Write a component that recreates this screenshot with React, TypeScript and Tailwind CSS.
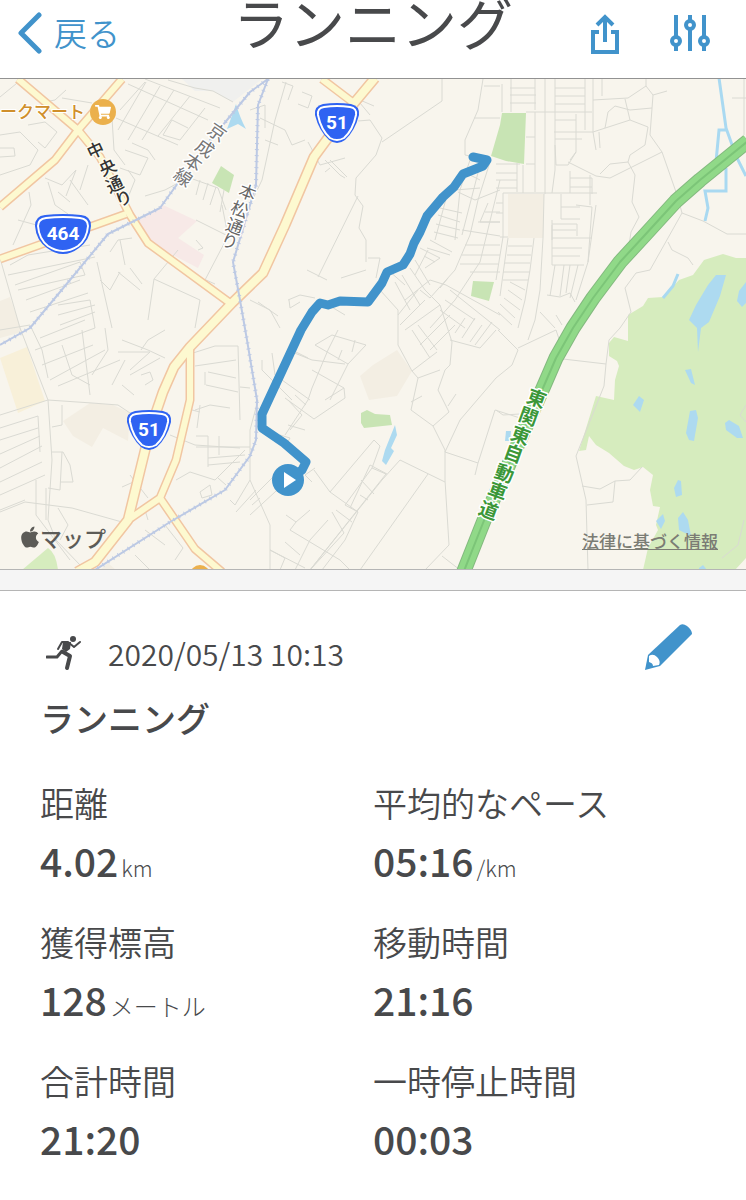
import { FaApple, FaShoppingCart } from "react-icons/fa";

type Stat = {
  label: string;
  value: string;
  unit?: string;
  unitSize?: string;
};

type Glyph = [string, number, number];

const stats: Stat[] = [
  { label: "距離", value: "4.02", unit: "km", unitSize: "text-[22px]" },
  { label: "平均的なペース", value: "05:16", unit: "/km", unitSize: "text-[22px]" },
  { label: "獲得標高", value: "128", unit: "メートル", unitSize: "text-[24px]" },
  { label: "移動時間", value: "21:16" },
  { label: "合計時間", value: "21:20" },
  { label: "一時停止時間", value: "00:03" },
];

// Map geometry, viewBox starts at y=79
const streets = [
  // top left
  "M22 79L0 97M32 88Q38 106 55 100L66 90M0 135L20 132L38 150L30 165L0 175M28 125L45 122L57 132L45 148L38 142M0 148L14 148L15 156L0 157M70 180L88 205M62 98L92 103",
  "M120 110L145 82M128 84L208 120M116 118L178 145M146 82L118 130M160 86L128 140M174 90L142 140M190 96L158 136M145 79L220 108M168 80L195 88L213 91L233 102M205 108L180 140L163 135L172 120L188 128M112 118L114 150L125 165M125 150L148 158L140 175L120 168M132 143L148 150L155 160",
  "M45 178L62 185L76 170L66 196M48 182L55 205L68 214M58 192L70 202M29 192L31 205L13 245M18 220L40 226M88 165L80 190M128 170L135 180L125 205M145 196L165 190L178 183M190 178L218 188L226 210M200 180L196 195M208 183L203 200M216 187L210 205M224 190L220 212",
  "M196 220L228 236M222 205L228 236L205 280M196 240L203 248L198 250M120 240L125 265M110 252L118 240L132 238M154 279L200 300L195 328M178 250L154 279L148 320M118 272L140 290M130 268L142 284M206 280L215 284",
  // left
  "M0 258L20 328L48 400L52 460L48 520L56 540L80 565M8 275L95 257M15 285L80 262L85 275L18 290M10 265L28 255L90 245M97 262L112 328M100 280L110 290L120 272M26 300L80 280M30 312L88 293M60 325L95 312M58 305L90 300L95 328M58 315L95 305",
  "M0 330L30 325L42 350L48 378M35 350L95 328M42 365L93 345M50 380L105 350M40 338L85 320M58 386L120 360M62 345L72 375L90 385M82 330L90 395M105 328L108 350L92 375M122 340L148 350L165 358M118 352L150 352L130 370M125 360L112 385M141 350L148 340L165 330M141 375L150 372L153 380L145 385M122 385L134 395M130 375L160 358",
  "M0 415L48 400L92 403L118 405L130 413M0 428L38 416L40 452M0 440L38 428M0 454L40 436M0 468L42 446M0 482L42 462M0 495L45 475M0 510L25 500M52 452L63 452L70 465L73 482L60 482M48 488L60 490L62 452M62 405L62 425L52 427M0 512L25 502L72 508L122 522M46 488L46 520M58 508L68 525L60 540M36 480L36 515L70 560M148 430L152 440M130 475L148 498M122 487L138 480M145 510L148 520",
  // route 51 surroundings
  "M193 353L215 346L238 346L240 420M195 366L236 360M208 372L236 378M206 385L238 392M205 372L205 385M240 387L250 388M195 410L210 405L230 408M200 405L197 428M192 410L200 412M170 435L195 445L240 448M196 436L208 436L208 467M196 447L250 447M219 436L219 455M208 458L245 455M208 465L240 462M176 480L190 472L215 480L245 450M218 478L226 485M200 492L210 485L212 495L202 498L200 492",
  "M250 480L235 505L230 500M145 530L165 545M165 525L183 548L175 560M135 555L150 570M258 400L250 430L250 480L270 525V570M250 515L288 480M250 500L275 475M236 512L256 490M252 505L260 498",
  "M250 110L265 105L265 128M286 82L275 120L262 180L250 205M282 82L293 86L288 100M302 92L312 96L308 108L298 104M260 118L285 130L292 145L305 140M265 140L278 145M308 142L315 155M320 165L345 158M325 160L340 175L345 178M325 172L330 168M370 115L360 103M358 121L370 120M370 120L382 138L376 155L356 178L355 195L363 206L359 228L366 240L366 262M360 100L374 106M442 79V101L382 142M358 196L318 277M307 270L327 280M341 278L366 270M368 258L380 258L376 278M312 150L320 165M330 160L347 177",
  // north estates
  "M483 79L478 110L465 140L465 155L490 160M474 118H500M484 86H500M502 84V112M511 79V112M535 79V110M545 79V194M555 79V170L552 193M585 79V130M510 88H535M510 95H536M510 103H536M555 88H585M555 96H585M555 104H585M526 112H592M593 79V132L554 132M555 120H576M555 139H582M576 114V152L570 160M593 100L628 98L646 86V79M602 79V96M625 99L630 120L593 132M605 128L608 112L615 106L630 110L652 108M630 120L648 127M646 86L653 95L650 135L662 152L676 192M653 95L667 91M648 127L645 145L630 155L628 162L610 164L600 174M628 162L635 175L632 202L639 217L631 232L629 245M593 132L596 150M599 132L600 148M568 162L596 176L610 178L662 152",
  "M535 112V192M526 164H535M526 137H535M496 164H520M496 173H517M496 180H517M496 188H517M517 163V192M523 165V193M503 193H597M544 194L543 238M552 238H592M561 194V219H580M570 171V193M570 178H592V194M570 187H592M561 207H580M576 205L592 207L588 262L576 300M596 205L588 262M552 220V265H584M552 224H577V236M552 230H576M552 248H582M552 256H580M552 240V225M590 205V175M555 145L556 165H568L576 152",
  "M555 265L550 296M564 265L560 296M570 265L566 293M578 265L570 298M547 295L560 297L570 293L575 302M508 238L500 296M534 238L530 270L525 300L518 328M543 238L540 290L535 320L528 340M508 246H532M507 255H531M505 263H530M503 272H530M503 280H528M500 237H508M503 193V237L496 280M496 203H503M496 213H503M510 282L525 290M508 290L522 300M504 298L520 310M500 304L515 318M498 312L512 325M540 312L555 328M556 315L562 325",
  // hatched residential blocks
  "M470 160L460 190L455 240M490 162L478 200L470 235L455 270L430 298M480 180L470 175M455 190L480 188M480 165L462 235M500 180L480 262L455 300L430 328M458 192L475 200L500 190M447 195L435 240M440 208L462 213M438 215L460 222M436 224L460 230M434 232L458 238M430 240L452 252M427 248L450 255M488 203L480 222H500M485 212H500M478 222H500M462 230L500 236M465 245H500M462 255H500M460 264H498M470 272H500",
  "M420 248L440 258L425 268M428 250L415 275M424 256L435 262M415 260L430 285M410 268L425 290L440 305M402 275L420 305M395 282L410 310M380 290L398 310L398 345L412 371M388 270L405 285M405 300L430 280L446 285L500 315M430 298L420 290M450 290L500 330M445 300L475 320M440 310L465 328M448 278L440 288M398 315L418 290M400 325L425 300M405 330L440 305",
  "M412 330L430 358M418 325L437 350M425 340L450 315M430 350L455 325M420 345L445 320M440 305L452 342L450 365L445 370M412 371L418 378L440 370M418 378L411 410L433 426L445 450V480L449 545L425 570M412 371L437 352M445 370L438 390L449 412L433 426M450 340L480 348L496 330M455 333L465 318M462 338L475 318M470 342L482 325M475 345L492 322M411 402L422 396M448 406L456 394",
  "M498 330L518 350L512 365L496 378L460 420L445 452M561 345L556 330L518 348M496 410L503 415L520 414M445 452L478 463L475 475M445 482L400 460L382 480L310 570M478 463L495 410L520 418M428 474L360 570M442 556L460 570M370 465L387 474M361 480L374 494M350 508L370 465",
  // centre
  "M330 306L345 315M288 300L300 295L315 298M289 300L290 308L300 302M250 300L270 310L280 328M258 302L278 316M315 345L332 335L366 345L348 364L315 345M338 330L328 350L312 388L308 400M292 352L312 360L345 364M296 352L308 358M342 350L338 360M355 340L352 352M348 364L330 400M312 370L344 388L345 398L314 419L285 398M344 388L325 400M272 353L275 375L310 400M288 400L302 415L290 430M295 395L306 405M308 400L285 435M288 425L305 430M280 435L290 438L286 445M262 360L262 370L292 400",
  "M315 468L305 475L312 482M314 470L330 492L358 512L345 540L322 570M330 492L374 440L380 446L372 468L345 505M336 510L352 522M332 512L344 533L310 570M328 520L310 540L295 570M310 510L296 522L290 530L340 560L350 570M286 515L296 522M270 550L305 568M285 542L300 555M280 570L285 558L270 550M345 505L358 512M372 468L386 474L310 570M360 495L368 500",
  // south east
  "M679 202L682 213L650 270L636 273L625 288L631 312L620 328M682 213L703 221L727 234H746M668 242L672 250L688 258L693 265M563 359L606 364L609 340L620 328M606 364L604 386L576 456L586 500L588 570M582 486L600 489L615 481L630 480L642 467M615 481L613 502L587 505M732 98H746M744 79V135",
  "M746 405L740 415L746 422M744 520L738 545L722 558",
];

const forest =
  "M628 328L628 315L643 306L648 298L663 297L679 280L693 275L704 260L723 254L736 258H746V558L735 570H643L648 548L658 530L656 525L660 507L653 506L650 490L653 475L643 467L634 470L624 466L609 453L596 445L589 436L586 450L579 451L596 396L614 400L615 380L619 366L617 361L609 356V343L614 337L628 341Z";

const parks = [
  "M491 156L500 125L502 113H526L524 164L506 161Z",
  "M473 281L494 282L489 301L471 296Z",
  "M221 166L234 175L229 193L212 183Z",
  "M361 413L367 410L375 414L390 415L392 425L364 428L361 423Z",
];

const lakes = [
  "M236 104Q240 118 246 129L238 124L227 129Q232 116 236 104Z",
  "M395 425L397 435L391 448L394 451L386 465L382 461L385 450Z",
  "M726 275H716L708 285L696 305L689 320L697 328L698 352L701 328L709 322L720 296Z",
  "M746 282L739 291L737 301L742 307L746 303Z",
  "M685 370L691 369L695 385L691 383Z",
  "M639 396L644 400L640 412L633 405Z",
  "M690 411L696 410L698 418L694 441L689 440L686 433Z",
  "M725 423L729 420L739 426L743 438L737 438L726 430Z",
  "M678 480L681 481L682 495L676 497L674 488Z",
  "M683 512L688 520L691 536L679 530L678 518Z",
  "M663 514L665 521L661 529L656 521Z",
  "M699 568L703 565L707 570H699Z",
  "M506 431H511L510 441H505Z",
];

const arterials =
  "M18 79L78 130L100 157L130 215L148 243L230 303M122 79L78 130L55 160L0 207M0 259L126 214M322 79L355 104M190 348V400L176 460L160 498L128 520M160 498L195 549L222 572";

const route51 =
  "M375 78L350 108L314 157L285 225L263 273L232 303L190 347L174 367L163 392L150 430L128 520L95 562L77 572";

const railways =
  "M268 79L250 92L218 131L178 183L160 208L108 234L60 292L30 328L0 345M268 79L258 105L256 185L233 262L240 300L247 340L257 400L256 440L250 456L225 490L170 522L95 570";

const expressway =
  "M748 141L700 180L676 201L644 236L620 262L593 298L573 328L556 358L543 388L485 518L462 576";

const track =
  "M473 157L487 160L483 166L463 174L454 187L443 197L427 216L420 232L414 243L410 254L403 265L387 272L382 283L368 302L340 301L328 305L320 303L312 312L301 330L262 414L262 428L284 443L306 462L302 470L288 480";

const chuoStreet: Glyph[] = [["中", 95, 149], ["央", 107, 166], ["通", 114, 183], ["り", 123, 197]];
const keiseiLine: Glyph[] = [["京", 218, 131], ["成", 206, 147], ["本", 194, 161], ["線", 184, 176]];
const honmatsuStreet: Glyph[] = [["本", 248, 191], ["松", 240, 208], ["通", 235, 225], ["り", 230, 240]];
const higashiKanto: Glyph[] = [
  ["東", 537, 397],
  ["関", 529, 415],
  ["東", 521, 434],
  ["自", 514, 452],
  ["動", 505, 472],
  ["車", 498, 490],
  ["道", 489, 509],
];

function RoadLabel({ glyphs, angle, className }: { glyphs: Glyph[]; angle: number; className: string }) {
  return (
    <g className={className} textAnchor="middle" strokeWidth="3" strokeLinejoin="round" paintOrder="stroke">
      {glyphs.map(([char, x, y]) => (
        <text key={`${x}-${y}`} x={x} y={y} dominantBaseline="central" transform={`rotate(${angle} ${x} ${y})`}>
          {char}
        </text>
      ))}
    </g>
  );
}

function Shield51({ x, y }: { x: number; y: number }) {
  return (
    <g transform={`translate(${x} ${y})`}>
      <path
        d="M-14 -19Q0 -21 14 -19Q23 -17 22 -8Q18 8 8 17Q0 23 -8 17Q-18 8 -22 -8Q-23 -17 -14 -19Z"
        fill="#2f63f2"
      />
      <path
        d="M-13 -16Q0 -18 13 -16Q20 -15 19 -8Q16 7 7 15Q0 19 -7 15Q-16 7 -19 -8Q-20 -15 -13 -16Z"
        fill="none"
        stroke="#fff"
        strokeWidth="2"
      />
      <text y="6" textAnchor="middle" className="fill-white font-[Roboto] text-[19px] font-bold">
        51
      </text>
    </g>
  );
}

function Shield464() {
  return (
    <g transform="translate(63 234)">
      <path
        d="M-18 -19Q0 -21 18 -19Q28 -18 28 -8Q27 6 16 14Q0 26 -16 14Q-27 6 -28 -8Q-28 -18 -18 -19Z"
        fill="#2f63f2"
      />
      <path
        d="M-17 -16Q0 -18 17 -16Q25 -15 25 -8Q24 5 15 12Q0 22 -15 12Q-24 5 -25 -8Q-25 -15 -17 -16Z"
        fill="none"
        stroke="#fff"
        strokeWidth="2"
      />
      <text y="6" textAnchor="middle" className="fill-white font-[Roboto] text-[19px] font-bold">
        464
      </text>
    </g>
  );
}

function RouteMap() {
  return (
    <svg viewBox="0 79 746 490" className="block h-auto w-full bg-[#f8f5ed]" role="img" aria-label="ランニングのルート">
      <path d="M182 79H262L233 102L213 91H195Z" fill="#f0f0ee" />
      <path d="M163 205L197 221L178 238L204 255L198 268L169 253L150 243L138 221Z" fill="#f7e9e7" />
      <path d="M0 358L27 347L45 401L18 413Z" fill="#f8f0d9" />
      <path
        d="M0 301L10 297L22 332L0 338ZM508 194H544L543 238H508ZM360 376L373 365L397 350L412 371L397 396L369 400ZM63 421L90 403L113 405L130 413L128 441L103 428L92 447L73 436ZM100 570L108 563L116 570Z"
        fill="#f3eee3"
      />
      <path d={forest} fill="#d6ecbe" />
      <path d="M22 570L48 548Q56 553 58 570Z" fill="#d6ecbe" />
      {parks.map((d) => (
        <path key={d} d={d} fill="#c8e4b4" />
      ))}
      {lakes.map((d) => (
        <path key={d} d={d} fill="#addaf0" />
      ))}
      <path
        d="M719 78L726 128L736 156L746 176M726 130H719L716 162M726 168V191H705L708 208L705 221M678 274L673 286L663 298"
        fill="none"
        stroke="#a9d9f1"
        strokeWidth="3"
      />
      {streets.map((d) => (
        <path key={d} d={d} fill="none" stroke="#dadad3" strokeWidth="1" />
      ))}

      <g fill="none" strokeLinejoin="round">
        <path d={arterials} stroke="#f1c6a2" strokeWidth="9" />
        <path d={route51} stroke="#f1c6a2" strokeWidth="11" />
        <path d={arterials} stroke="#fdf9d0" strokeWidth="6" />
        <path d={route51} stroke="#fdf9d0" strokeWidth="8" />
        <path d={railways} stroke="#bcc9e4" strokeWidth="2" />
        <path d={railways} stroke="#bcc9e4" strokeWidth="4" strokeDasharray="1 5" />
        <path d={expressway} stroke="#83b97f" strokeWidth="15" />
        <path d={expressway} stroke="#90d988" strokeWidth="13" />
        <path d={expressway} stroke="#7cc578" strokeWidth="2" />
        <path d={track} stroke="#4193cb" strokeWidth="9" strokeLinecap="round" />
      </g>

      <g className="font-['Noto_Sans_CJK_JP',sans-serif]">
        <RoadLabel glyphs={chuoStreet} angle={-25} className="fill-[#333] stroke-[#fdfbf0] text-[17px] font-medium" />
        <RoadLabel glyphs={keiseiLine} angle={35} className="fill-[#777] stroke-white text-[18px]" />
        <RoadLabel glyphs={honmatsuStreet} angle={20} className="fill-[#666] stroke-white text-[17px]" />
        <RoadLabel glyphs={higashiKanto} angle={20} className="fill-[#3b9738] stroke-white text-[19px] font-bold" />
        <text x="0" y="118" className="fill-[#d08f2b] stroke-white text-[17px] font-medium" strokeWidth="2" paintOrder="stroke">
          ークマート
        </text>
      </g>

      <circle cx="103" cy="112" r="13" fill="#ebb04c" />
      <FaShoppingCart x="95" y="104" width="16" height="16" size={16} color="#fff" />
      <circle cx="200" cy="575" r="10" fill="#ebb04c" />

      <Shield51 x={337} y={123} />
      <Shield51 x={149} y={430} />
      <Shield464 />

      <circle cx="288" cy="480" r="16" fill="#4193cb" />
      <path d="M284 472V488L296 480Z" fill="#fff" />
    </svg>
  );
}

function RunnerIcon() {
  return (
    <svg viewBox="0 0 36 36" className="size-9" fill="none" stroke="currentColor" strokeLinejoin="round" aria-hidden="true">
      <circle cx="27" cy="4" r="3" fill="currentColor" stroke="none" />
      <path d="M12 14L16 7H22L28 12L34 7" strokeWidth="2" strokeLinecap="round" />
      <path d="M17 7L25 7L24 14L20 17L16 14Z" fill="currentColor" stroke="none" />
      <path d="M1 22H11L16 16" strokeWidth="3" strokeLinecap="round" />
      <path d="M17 17L24 21L21 33" strokeWidth="4" strokeLinecap="round" />
    </svg>
  );
}

export default function App() {
  return (
    <main className="bg-white font-['Noto_Sans_CJK_JP',sans-serif] text-[#48494b]">
      <header className="grid h-[79px] grid-cols-[1fr_auto_1fr] overflow-hidden border-b border-[#929292]">
        <button className="flex h-[66px] items-center gap-3 pl-[18px] text-[33px] font-[350] text-[#4193cb]">
          <svg viewBox="0 0 24 42" className="h-[42px] w-6" fill="none" stroke="currentColor" strokeWidth="5" aria-hidden="true">
            <path d="M21 3L3 21L21 39" strokeLinecap="round" strokeLinejoin="round" />
          </svg>
          戻る
        </button>
        <h1 className="text-[56px] leading-[42px]">ランニング</h1>
        <div className="flex h-[66px] items-center justify-end gap-[50px] pr-[35px] text-[#4193cb]">
          <button aria-label="共有">
            <svg viewBox="0 0 30 42" className="h-[42px] w-[30px]" fill="none" stroke="currentColor" strokeWidth="4" aria-hidden="true">
              <path d="M10 20H4V40H28V20H22" />
              <path d="M16 30V5M8 13L16 5L24 13" />
            </svg>
          </button>
          <button aria-label="設定">
            <svg viewBox="0 0 42 38" className="h-[38px] w-[42px]" fill="none" stroke="currentColor" strokeWidth="4" aria-hidden="true">
              <path d="M7 1V22M7 32V37M21 1V6M21 16V37M35 1V22M35 32V37" />
              <circle cx="7" cy="27" r="4" />
              <circle cx="21" cy="11" r="4" />
              <circle cx="35" cy="27" r="4" />
            </svg>
          </button>
        </div>
      </header>

      <section className="relative">
        <RouteMap />
        <div className="absolute bottom-[14px] left-5 flex items-center text-[#5c5b57]">
          <FaApple className="h-6 w-5" aria-hidden="true" />
          <span className="text-[22px] leading-9 font-medium">マップ</span>
        </div>
        <a href="#legal" className="absolute right-7 bottom-4 text-[17px] leading-6 font-medium text-[#7b7c74] underline">
          法律に基づく情報
        </a>
      </section>
      <div className="h-[22px] border-y border-[#b5b5b5] bg-[#f5f5f5]" />

      <section className="px-10 pt-8">
        <div className="flex items-center">
          <div className="ml-[6px] flex items-center gap-[26px]">
            <RunnerIcon />
            <time dateTime="2020-05-13T10:13" className="text-[30px] leading-[60px] font-[350]">
              2020/05/13 10:13
            </time>
          </div>
          <button aria-label="編集" className="mr-3 mb-3 ml-auto text-[#4193cb]">
            <svg viewBox="0 0 50 48" className="h-12 w-[50px]" aria-hidden="true">
              <path d="M1 47L4 32L36 2Q39 0 43 3Q48 7 48 11L16 43Z" fill="currentColor" />
              <path d="M5 33Q9 30 13 34Q17 38 15 42L9 43Q9 40 5 39Z" fill="#fff" />
            </svg>
          </button>
        </div>
        <h2 className="text-[34px] leading-[70px] font-medium">ランニング</h2>

        <dl className="mt-5 grid grid-cols-2">
          {stats.map((stat) => (
            <div key={stat.label} className="h-[139px]">
              <dt className="text-[34px] leading-[60px] font-[350]">{stat.label}</dt>
              <dd className="flex items-baseline gap-[3px] text-[39px] leading-[54px] font-medium">
                {stat.value}
                {stat.unit && <span className={`${stat.unitSize} font-light`}>{stat.unit}</span>}
              </dd>
            </div>
          ))}
        </dl>
      </section>
    </main>
  );
}
